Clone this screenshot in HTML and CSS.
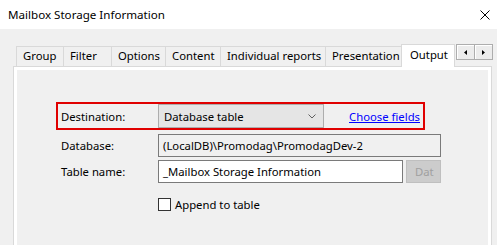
FILE: index.html
```html
<!DOCTYPE html>
<html lang="en">

<head>
    <meta charset="UTF-8">
    <meta name="viewport" content="width=device-width, initial-scale=1.0">
    <link rel="stylesheet" href="styles.css">
    <title>Mailbox Storage Information</title>
</head>

<body>

    <header class="titlebar">
        <span class="titlebar-text">Mailbox Storage Information</span>
        <svg class="close" width="10" height="10" viewBox="0 0 10 10">
            <path d="M0.5 0.5 L9.5 9.5 M9.5 0.5 L0.5 9.5" stroke="#000" stroke-width="1" fill="none" />
        </svg>
    </header>

    <nav class="tabs">
        <div class="tab">Group</div>
        <div class="tab">Filter</div>
        <div class="tab">Options</div>
        <div class="tab">Content</div>
        <div class="tab">Individual reports</div>
        <div class="tab">Presentation</div>
        <div class="tab active">Output</div>
        <div class="scroller">
            <span class="scroll-btn">
                <svg width="3" height="5" viewBox="0 0 3 5"><polygon points="3,0 3,5 0,2.5" fill="#000" /></svg>
            </span>
            <span class="scroll-btn">
                <svg width="3" height="5" viewBox="0 0 3 5"><polygon points="0,0 0,5 3,2.5" fill="#000" /></svg>
            </span>
        </div>
    </nav>

    <section class="panel">
        <div class="panel-body">
            <div class="form">

                <div class="row row-destination">
                    <span class="label">Destination:</span>
                    <div class="combo">
                        <span>Database table</span>
                        <svg width="8" height="5" viewBox="0 0 8 5">
                            <path d="M0.5 0.5 L4 4 L7.5 0.5" stroke="#606060" stroke-width="1" fill="none" />
                        </svg>
                    </div>
                    <a href="#" class="choose-link">Choose fields</a>
                </div>

                <div class="row row-database">
                    <span class="label">Database:</span>
                    <div class="input readonly db-input">(LocalDB)\Promodag\PromodagDev-2</div>
                </div>

                <div class="row row-table">
                    <span class="label">Table name:</span>
                    <div class="input table-input">_Mailbox Storage Information</div>
                    <button class="btn-disabled">Dat</button>
                </div>

                <div class="row row-append">
                    <span class="label"></span>
                    <span class="checkbox"></span>
                    <span class="check-label">Append to table</span>
                </div>

            </div>
        </div>
    </section>

</body>

</html>
```

FILE: styles.css
```css
* {
    box-sizing: border-box;
    font-family: "Noto Sans", "Open Sans", sans-serif;
    font-size: 11.3px;
    color: #000;
}

body {
    margin: 0;
    width: 497px;
    height: 245px;
    overflow: hidden;
    background-color: #f0f0f0;
}

.titlebar {
    height: 29px;
    background-color: #fff;
    display: flex;
    align-items: center;
    justify-content: space-between;
    padding: 0 7px 0 8px;
}

.titlebar-text {
    font-size: 11.6px;
    line-height: 16px;
}

.close {
    display: block;
}

.tabs {
    margin-top: 15px;
    height: 22px;
    padding-left: 16px;
    display: flex;
    align-items: flex-end;
}

.tab {
    height: 20px;
    line-height: 18px;
    padding-left: 6px;
    border: 1px solid #d9d9d9;
    border-right: none;
    border-bottom: none;
    white-space: nowrap;
    overflow: hidden;
}

.tab:nth-child(1) { width: 47px; }
.tab:nth-child(2) { width: 48px; }
.tab:nth-child(3) { width: 54px; }
.tab:nth-child(4) { width: 55px; }
.tab:nth-child(5) { width: 105px; }
.tab:nth-child(6) { width: 76px; }

.tab.active {
    width: 54px;
    height: 23px;
    margin-bottom: -1px;
    padding-left: 8px;
    line-height: 19px;
    background-color: #fff;
    border-right: 1px solid #d9d9d9;
    position: relative;
    z-index: 1;
}

.scroller {
    align-self: flex-start;
    margin-left: 1px;
    display: flex;
}

.scroll-btn {
    width: 19px;
    height: 16px;
    border: 1px solid #adadad;
    background-color: #ececec;
    box-shadow: inset 1px 1px 0 #fff;
    display: flex;
    align-items: center;
    justify-content: center;
}

.scroll-btn + .scroll-btn {
    margin-left: -1px;
}

.scroll-btn svg {
    display: block;
}

.panel {
    margin-left: 13px;
    width: 479px;
    height: 190px;
    border: 1px solid #d9d9d9;
}

.panel-body {
    height: 100%;
    border: 3px solid #fff;
    background-color: #f0f0f0;
}

.form {
    padding: 32px 0 0 44px;
}

.row {
    display: flex;
    align-items: center;
}

.label {
    width: 97px;
    flex: none;
}

.row-destination {
    margin-left: -5px;
    width: 369px;
    height: 28px;
    padding: 0 3px;
    border: 2px solid #e00000;
}

.combo {
    width: 166px;
    height: 24px;
    padding: 0 7px 0 5px;
    border: 1px solid #adadad;
    background-color: #e5e5e5;
    display: flex;
    align-items: center;
    justify-content: space-between;
}

.combo svg {
    display: block;
}

.choose-link {
    margin-left: auto;
    color: #0000ff;
    text-decoration: underline;
}

.row-database {
    margin-top: 4px;
}

.row-table {
    margin-top: 3px;
}

.input {
    height: 23px;
    line-height: 21px;
    padding-left: 4px;
    border: 1px solid #7a7a7a;
    background-color: #fff;
    white-space: nowrap;
    overflow: hidden;
}

.input.readonly {
    background-color: #f0f0f0;
}

.db-input {
    width: 283px;
}

.table-input {
    width: 245px;
}

.btn-disabled {
    margin-left: 3px;
    width: 35px;
    height: 23px;
    padding: 0 0 0 8px;
    text-align: left;
    border: 1px solid #bfbfbf;
    background-color: #cccccc;
    color: #a0a0a0;
    overflow: hidden;
}

.row-append {
    margin-top: 14px;
}

.checkbox {
    width: 13px;
    height: 13px;
    border: 1px solid #333;
    background-color: #fff;
}

.check-label {
    margin-left: 4px;
}
```
